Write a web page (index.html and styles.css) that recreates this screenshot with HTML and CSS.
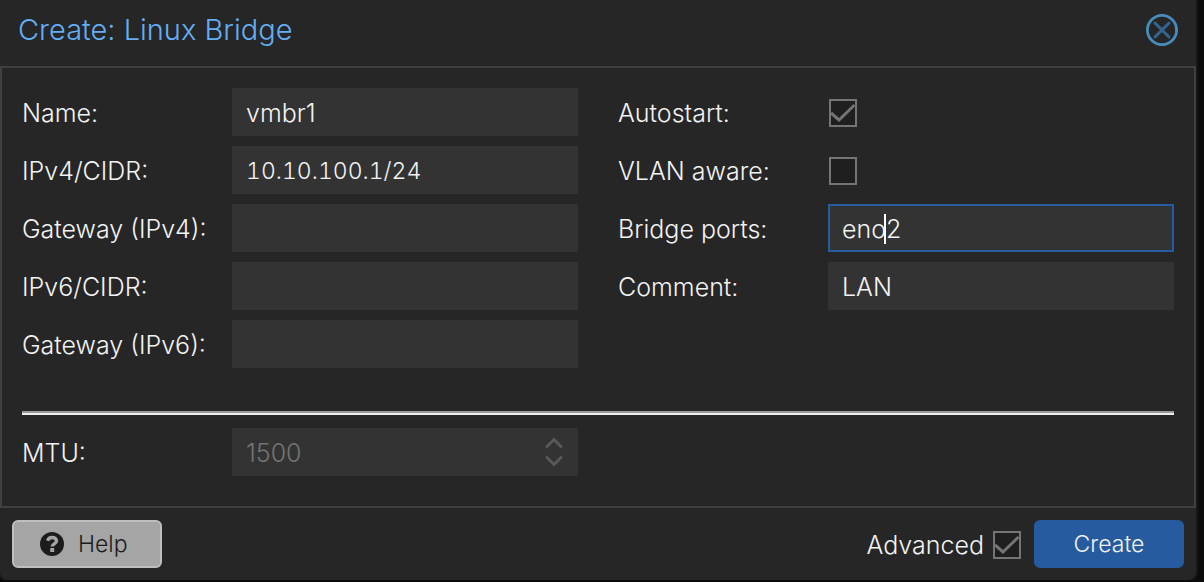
FILE: index.html
```html
<!DOCTYPE html>
<html lang="en">
<head>
    <meta charset="UTF-8">
    <meta name="viewport" content="width=device-width, initial-scale=1.0">
    <title>Create: Linux Bridge</title>
    <link rel="stylesheet" href="styles.css">
</head>
<body>
    <main class="window">
      <header class="window-header">
        <h1 class="window-title">Create: Linux Bridge</h1>
        <button class="close" type="button" aria-label="Close">
          <svg viewBox="0 0 32 32" width="32" height="32" fill="none">
            <circle cx="16" cy="16" r="14.600" stroke="#468dbc" stroke-width="2.800"/>
            <path d="M9 9l14 14M23 9L9 23" stroke="#336594" stroke-width="3" stroke-linecap="round"/>
          </svg>
        </button>
      </header>

      <form class="panel" id="bridge">
        <div class="columns">
          <div class="column">
            <div class="row">
              <label for="name">Name:</label>
              <input class="field" id="name" type="text" value="vmbr1">
            </div>
            <div class="row">
              <label for="cidr4">IPv4/CIDR:</label>
              <input class="field is-numeric" id="cidr4" type="text" value="10.10.100.1/24">
            </div>
            <div class="row">
              <label for="gateway4">Gateway (IPv4):</label>
              <input class="field is-numeric" id="gateway4" type="text">
            </div>
            <div class="row">
              <label for="cidr6">IPv6/CIDR:</label>
              <input class="field is-numeric" id="cidr6" type="text">
            </div>
            <div class="row">
              <label for="gateway6">Gateway (IPv6):</label>
              <input class="field is-numeric" id="gateway6" type="text">
            </div>
          </div>
          <div class="column">
            <div class="row">
              <label for="autostart">Autostart:</label>
              <input class="check" id="autostart" type="checkbox" checked>
            </div>
            <div class="row">
              <label for="vlan">VLAN aware:</label>
              <input class="check" id="vlan" type="checkbox">
            </div>
            <div class="row">
              <label for="ports">Bridge ports:</label>
              <div class="field-wrap">
                <input class="field is-active" id="ports" type="text" value="eno2">
                <span class="caret"></span>
              </div>
            </div>
            <div class="row">
              <label for="comment">Comment:</label>
              <input class="field" id="comment" type="text" value="LAN">
            </div>
          </div>
        </div>

        <hr class="divider">

        <div class="columns">
          <div class="row">
            <label for="mtu">MTU:</label>
            <div class="field-wrap">
              <input class="field" id="mtu" type="number" placeholder="1500" disabled>
              <div class="spinner">
                <button type="button" aria-label="Increase MTU" disabled>
                  <svg viewBox="0 0 18 12" width="18" height="12"><path d="M1 10.500L9 2.500l8 8"/></svg>
                </button>
                <button type="button" aria-label="Decrease MTU" disabled>
                  <svg viewBox="0 0 18 12" width="18" height="12"><path d="M1 1.500l8 8 8-8"/></svg>
                </button>
              </div>
            </div>
          </div>
        </div>
      </form>

      <footer class="window-footer">
        <button class="btn btn-help" type="button">
          <svg viewBox="0 0 24 24" width="24" height="24">
            <circle cx="12" cy="12" r="12" fill="#1c1c1c"/>
            <path d="M7.600 8.800c.7-2.200 2.100-3.300 4.500-3.300 2.600 0 4.400 1.400 4.400 3.400 0 2.900-4.300 2.900-4.300 5.600" fill="none" stroke="#a5a5a5" stroke-width="3.400"/>
            <path d="M10.200 16h4v4h-4z" fill="#a5a5a5"/>
          </svg>
          Help
        </button>
        <label class="advanced" for="advanced">Advanced</label>
        <input class="check" id="advanced" type="checkbox" checked>
        <button class="btn btn-create" type="submit" form="bridge">Create</button>
      </footer>
    </main>
</body>
</html>
```
FILE: styles.css
```css
* {
  box-sizing: border-box;
}

body {
  margin: 0;
  padding-right: 8px;
  font: 300 25px/30px Inter, "Liberation Sans", sans-serif;
  color: #f2f2f2;
  background: #0b0b0b;
}

input,
button {
  font: inherit;
  color: inherit;
}

label {
  padding-top: 2px;
}

.window {
  background: #262626;
  border-radius: 0 0 8px 8px;
  box-shadow: 0 0 2px 2px #1a1a1a;
}

.window-header {
  display: flex;
  align-items: center;
  justify-content: space-between;
  height: 66px;
  padding: 0 18px 6px;
}
.window-title {
  margin: 0;
  font-size: 29px;
  font-weight: 300;
  color: #64aef5;
}

.close {
  display: flex;
  padding: 0;
  border: 0;
  background: none;
  cursor: pointer;
}

.panel {
  padding: 20px 20px 30px;
  border: 2px solid #404040;
}
.columns {
  display: grid;
  grid-template-columns: 1fr 1fr;
  column-gap: 40px;
}
.column {
  display: flex;
  flex-direction: column;
  gap: 10px;
}
.row {
  display: grid;
  grid-template-columns: 210px 1fr;
  align-items: center;
  height: 48px;
}

.field {
  width: 100%;
  height: 48px;
  padding: 2px 12px 0;
  border: 2px solid #333;
  border-radius: 0;
  outline: 0;
  background: #333;
  appearance: textfield;
}
.field.is-numeric {
  font-size: 23px;
  font-variant-numeric: tabular-nums;
}
.field::placeholder {
  color: #737373;
  opacity: 1;
}
.field.is-active,
.field:focus {
  border-color: #265c9f;
}
.field-wrap {
  position: relative;
}
.caret {
  position: absolute;
  top: 10px;
  left: 56px;
  width: 2px;
  height: 30px;
  background: #fff;
}

.check {
  width: 28px;
  height: 28px;
  margin: 2px 1px 0;
  border: 2px solid #757575;
  background: #1f1f1f;
  appearance: none;
}
.check:checked {
  background: #1f1f1f url("data:image/svg+xml,%3Csvg xmlns='http://www.w3.org/2000/svg' viewBox='0 0 24 24'%3E%3Cpath d='M0 12l8 7L23.500 4' fill='none' stroke='%23757575' stroke-width='3'/%3E%3C/svg%3E") center / 24px 24px no-repeat;
}

.spinner {
  position: absolute;
  top: 0;
  right: 15px;
  bottom: 0;
  display: flex;
  flex-direction: column;
  justify-content: center;
  gap: 6px;
}
.spinner button {
  display: flex;
  padding: 0;
  border: 0;
  background: none;
}
.spinner path {
  fill: none;
  stroke: #595959;
  stroke-width: 3;
}

.divider {
  height: 4px;
  margin: 43px 0 13px;
  border: 0;
  border-top: 2px solid #9a9a9a;
  background: #eee;
}

.window-footer {
  display: flex;
  align-items: center;
  padding: 12px;
}
.btn {
  display: flex;
  align-items: center;
  justify-content: center;
  width: 150px;
  height: 48px;
  padding: 0;
  border: 2px solid #265c9f;
  border-radius: 6px;
  font-size: 23px;
  cursor: pointer;
}
.btn-help {
  justify-content: flex-start;
  gap: 14px;
  margin-right: auto;
  padding-left: 26px;
  border-color: #bfbfbf;
  color: #1c1c1c;
  background: #a5a5a5;
}
.advanced {
  margin-right: 8px;
}
.btn-create {
  margin-left: 12px;
  background: #265c9f;
}
```
